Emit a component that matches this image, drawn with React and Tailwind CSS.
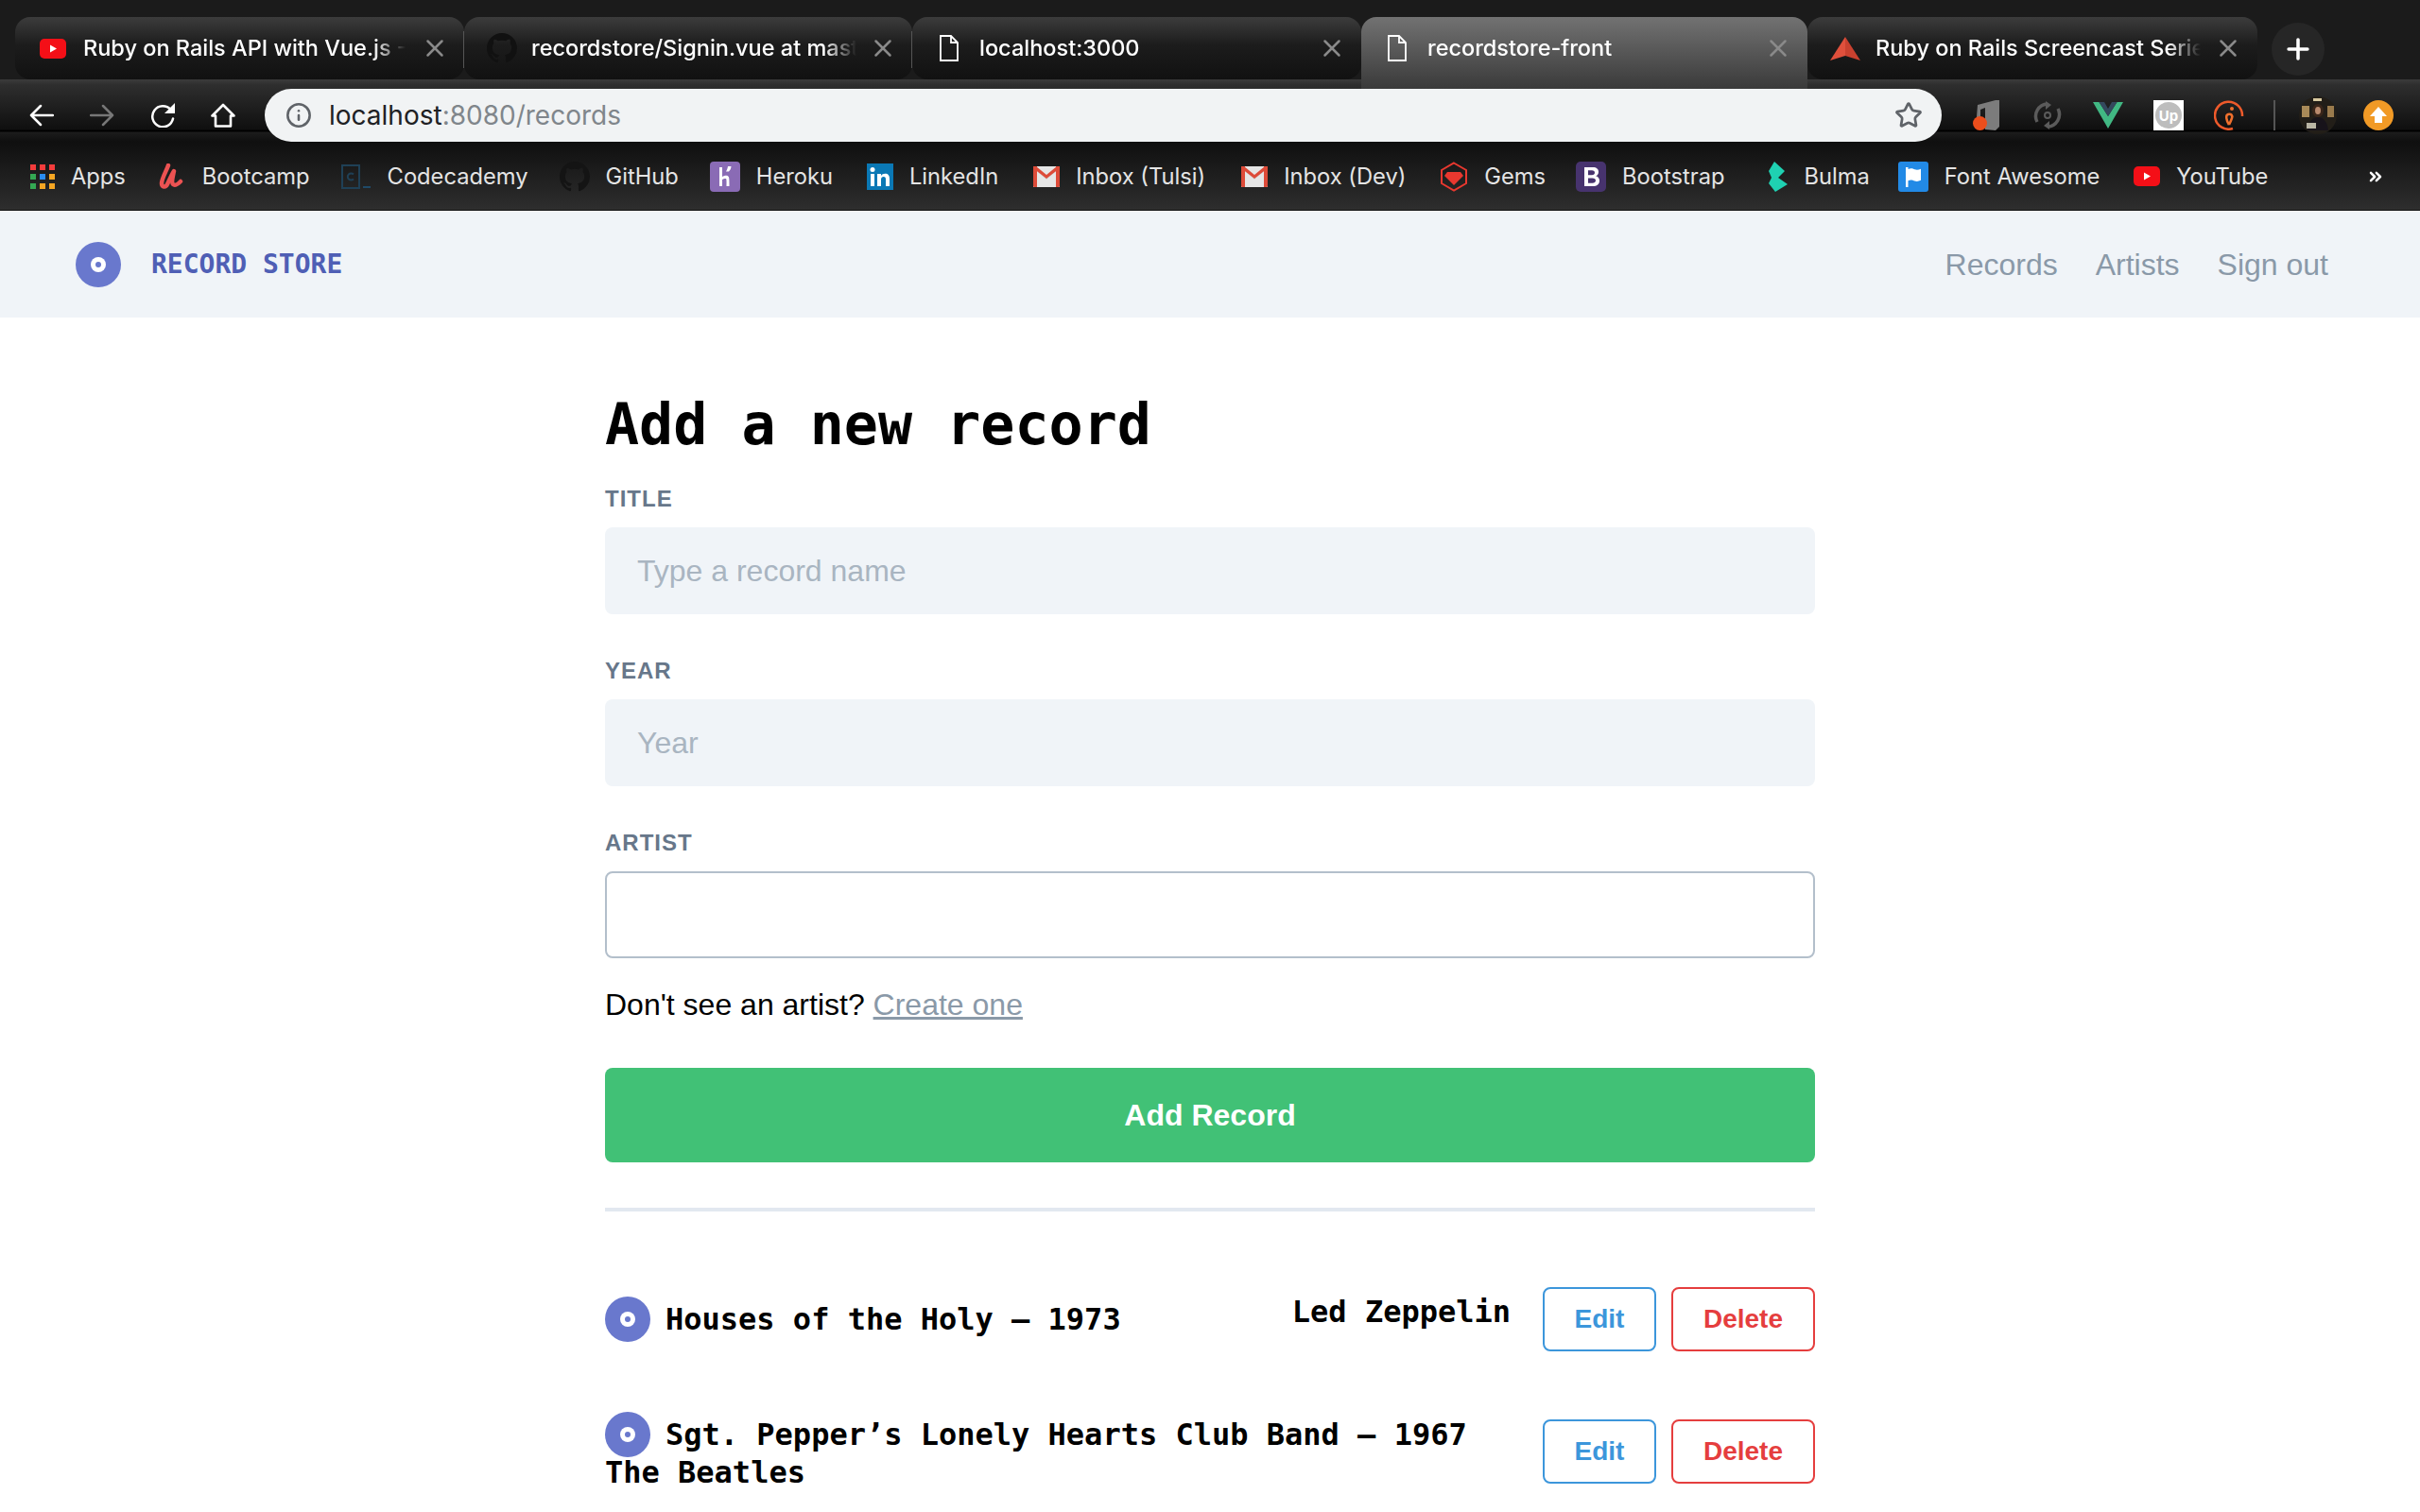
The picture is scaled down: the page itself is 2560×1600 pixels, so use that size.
import React from "react";
import { Star, Info, X, Plus, ChevronsRight } from "lucide-react";

const YouTubeIcon = ({ className }) => (
  <svg viewBox="0 0 28 21" className={className}>
    <rect width="28" height="21" rx="5" fill="#f40f17" />
    <path d="M11 6.500l7 4-7 4z" fill="#fff" />
  </svg>
);
const GitHubIcon = ({ className, fill = "#111" }) => (
  <svg viewBox="0 0 16 16" className={className} fill={fill}>
    <path d="M8 0C3.58 0 0 3.58 0 8c0 3.54 2.29 6.53 5.47 7.59.4.07.55-.17.55-.38v-1.34c-2.23.48-2.7-1.07-2.7-1.07-.36-.92-.89-1.17-.89-1.17-.73-.5.05-.49.05-.49.8.06 1.23.83 1.23.83.71 1.22 1.87.87 2.33.66.07-.52.28-.87.51-1.07-1.78-.2-3.64-.89-3.64-3.95 0-.87.31-1.59.82-2.15-.08-.2-.36-1.02.08-2.12 0 0 .67-.21 2.2.82A7.7 7.7 0 018 3.87c.68 0 1.36.09 2 .27 1.53-1.04 2.2-.82 2.2-.82.44 1.1.16 1.92.08 2.12.51.56.82 1.27.82 2.15 0 3.07-1.87 3.75-3.65 3.95.29.25.54.73.54 1.48v2.19c0 .21.15.46.55.38A8 8 0 0016 8c0-4.42-3.58-8-8-8z" />
  </svg>
);
const RubyArrow = ({ className }) => (
  <svg viewBox="0 0 32 25" className={className}>
    <path d="M16 0L0 25l16-5z" fill="#e0503c" />
    <path d="M16 0l16 25-16-5z" fill="#c9412f" />
  </svg>
);
const AppsIcon = ({ className }) => {
  const cs = ["#f43c3c", "#f43c3c", "#f43c3c", "#34a853", "#2a8cf0", "#f5a623", "#34a853", "#f5a623", "#f5a623"];
  return (
    <svg viewBox="0 0 26 26" className={className}>
      {cs.map((c, i) => (
        <rect key={i} x={(i % 3) * 10} y={Math.floor(i / 3) * 10} width="6" height="6" fill={c} />
      ))}
    </svg>
  );
};
const UdemyIcon = ({ className }) => (
  <svg viewBox="0 0 30 28" className={className} fill="none">
    <path d="M11 2C9 8 4 16 4 21c0 4 4 5 6 1 2-4 5-11 7-14-1 5-3 12-1 14 2 2 5 0 8-3" stroke="#ec5252" strokeWidth="4.5" strokeLinecap="round" strokeLinejoin="round" />
  </svg>
);
const CodecademyIcon = ({ className }) => (
  <svg viewBox="0 0 32 26" className={className} fill="none">
    <rect x="1" y="1" width="18" height="24" stroke="#1f4056" strokeWidth="2" />
    <path d="M13 10.500a3.600 3.600 0 100 5" stroke="#1f4056" strokeWidth="2" />
    <rect x="23" y="23" width="8" height="2" fill="#1f4a68" />
  </svg>
);
const HerokuIcon = ({ className }) => (
  <svg viewBox="0 0 32 32" className={className}>
    <rect width="32" height="32" rx="4" fill="#8a6bb5" />
    <path d="M10 6h3v10c3-1.500 6-2 7 .5.5 1.500.5 5 .5 9.500h-3c0-3 .2-7-.3-7.700-.7-.8-3 0-4.200.7v7h-3zM19 5h3.500c-.3 2.500-1 4-2.500 5.500h-3c1-1.500 1.700-3.200 2-5.500z" fill="#fff" />
  </svg>
);
const LinkedInIcon = ({ className }) => (
  <svg viewBox="0 0 28 28" className={className}>
    <rect width="28" height="28" fill="#0a78b5" />
    <rect x="4" y="11" width="4" height="13" fill="#fff" />
    <circle cx="6" cy="6.500" r="2.500" fill="#fff" />
    <path d="M11 11h4v2c1-1.500 2.500-2.300 4.300-2.300 3.300 0 4.700 2 4.700 5.300v8h-4v-7.300c0-1.700-.6-2.700-2.200-2.700-1.700 0-2.800 1.100-2.800 3v7h-4z" fill="#fff" />
  </svg>
);
const GmailIcon = ({ className }) => (
  <svg viewBox="0 0 28 22" className={className}>
    <rect width="28" height="22" fill="#e6e6e6" />
    <path d="M0 0l14 11L28 0v2L14 14 0 2z" fill="#d4d4d4" />
    <path d="M0 0h4v22H1a1 1 0 01-1-1zM24 0h4v21a1 1 0 01-1 1h-3zM0 0h3l11 9 11-9h3v2L14 13 0 2z" fill="#dd4b39" />
  </svg>
);
const GemsIcon = ({ className }) => (
  <svg viewBox="0 0 30 32" className={className} fill="none">
    <path d="M15 1.500L28 9v14l-13 7.500L2 23V9z" stroke="#e9382f" strokeWidth="2" />
    <path d="M8 11h14l3 4-10 10L5 15z" fill="#e9382f" />
  </svg>
);
const BootstrapIcon = ({ className }) => (
  <svg viewBox="0 0 32 32" className={className}>
    <rect width="32" height="32" rx="5" fill="#47336e" />
    <path d="M9 6h9c4 0 6 2 6 5 0 2.200-1.200 3.700-3 4.300 2.400.5 4 2.300 4 4.900 0 3.700-2.700 5.800-7 5.800H9zm4 3.300v5h4c2 0 3-.9 3-2.500s-1-2.500-3-2.500zm0 8.200v5.200h4.500c2.200 0 3.500-.9 3.500-2.600s-1.300-2.600-3.500-2.600z" fill="#fff" />
  </svg>
);
const BulmaIcon = ({ className }) => (
  <svg viewBox="0 0 22 32" className={className}>
    <path d="M7 0l11 10-7 7 10 7-13 8-7-9 3-6-3-7z" fill="#1fd1b2" />
  </svg>
);
const FontAwesomeIcon = ({ className }) => (
  <svg viewBox="0 0 32 32" className={className}>
    <rect width="32" height="32" rx="3" fill="#228ae6" />
    <path d="M8 6h2.500v2c3-1.500 5-.5 7 .3 2 .7 4 .5 6.500-.5v12c-2.500 1.200-4.500 1.500-6.500.7-2-.8-4.500-1.700-7-.3V27H8z" fill="#fff" />
  </svg>
);
const BackIcon = ({ className, color = "#fff" }) => (
  <svg viewBox="0 0 26 26" className={className} fill="none" stroke={color} strokeWidth="2.500" strokeLinecap="round" strokeLinejoin="round">
    <path d="M25 13H2M12 3L2 13l10 10" />
  </svg>
);
const ForwardIcon = ({ className, color = "#777" }) => (
  <svg viewBox="0 0 26 26" className={className} fill="none" stroke={color} strokeWidth="2.500" strokeLinecap="round" strokeLinejoin="round">
    <path d="M1 13h23M14 3l10 10-10 10" />
  </svg>
);
const ReloadIcon = ({ className }) => (
  <svg viewBox="0 0 27 26" className={className} fill="none">
    <path d="M21.500 7A11 11 0 1024 16.500" stroke="#fff" strokeWidth="2.500" strokeLinecap="round" />
    <path d="M26 0v11H15z" fill="#fff" />
  </svg>
);
const HomeIcon = ({ className }) => (
  <svg viewBox="0 0 26 26" className={className} fill="none" stroke="#fff" strokeWidth="2.600" strokeLinejoin="round">
    <path d="M13 2L1.500 13.500H5V24.500h16V13.500h3.500z" />
  </svg>
);
const DocIcon = ({ className }) => (
  <svg viewBox="0 0 20 28" className={className} fill="none" stroke="#fff" strokeWidth="1.800">
    <path d="M1 1h11l7 7v19H1zM12 1v7h7" />
  </svg>
);
const MusicExt = ({ className }) => (
  <svg viewBox="0 0 28 32" className={className}>
    <path d="M5 5L24 0h4v28l-4 4-11-1V8l-5 2v8H4z" fill="#7c7c7c" />
    <circle cx="7.500" cy="24.500" r="7.500" fill="#ec4e1c" />
  </svg>
);
const SyncExt = ({ className }) => (
  <svg viewBox="0 0 30 30" className={className} fill="none" stroke="#5b5b5b" strokeWidth="3.500">
    <path d="M4 22A13 13 0 0115 3" />
    <path d="M26 8a13 13 0 01-11 19" />
    <path d="M13 0l6 4-6 5zM17 21l-6 5 6 4z" fill="#5b5b5b" stroke="none" />
    <circle cx="15" cy="15" r="3" strokeWidth="2" />
  </svg>
);
const VueExt = ({ className }) => (
  <svg viewBox="0 0 32 28" className={className}>
    <path d="M0 0h6.500L16 15 25.500 0H32L16 28z" fill="#41b883" />
    <path d="M6.500 0H12l4 7 4-7h5.500L16 15z" fill="#34495e" />
  </svg>
);
const UpExt = ({ className }) => (
  <div className={`${className} flex items-center justify-center bg-white`}>
    <div className="flex h-[28px] w-[28px] items-center justify-center rounded-full bg-[#bdbdbd] text-[15px] leading-none font-bold text-white">Up</div>
  </div>
);
const SwirlExt = ({ className }) => (
  <svg viewBox="0 0 32 32" className={className} fill="none" strokeWidth="2.500">
    <path d="M20 30A14.500 14.500 0 1130 17" stroke="#ee5a2b" />
    <path d="M16 26c-3-5-4-10-1-11 3-1 5 1 4 4-1 3-2 5-3 7" stroke="#f0702d" />
    <circle cx="19" cy="9" r="2" fill="#f0702d" stroke="none" />
  </svg>
);
const Avatar = ({ className }) => (
  <svg viewBox="0 0 40 40" className={className}>
    <circle cx="20" cy="20" r="20" fill="#221e18" />
    <rect x="3" y="10" width="8" height="12" fill="#a98a58" />
    <rect x="30" y="10" width="7" height="12" fill="#9a7b4d" />
    <ellipse cx="20" cy="15" rx="6" ry="7" fill="#3a261a" />
    <ellipse cx="20" cy="15" rx="3" ry="4" fill="#b98a6e" />
    <path d="M9 36c1-10 6-14 11-14s10 4 11 14z" fill="#17131a" />
    <rect x="8" y="28" width="10" height="6" fill="#b9b5a5" />
    <rect x="15" y="2" width="9" height="3" fill="#d8c9a0" />
  </svg>
);
const UpdateExt = ({ className }) => (
  <svg viewBox="0 0 32 32" className={className}>
    <circle cx="16" cy="16" r="16" fill="#f19a26" />
    <path d="M16 7l9 10h-5v7h-8v-7H7z" fill="#fff" />
  </svg>
);
const Disc = () => (
  <svg viewBox="0 0 48 48" className="h-[48px] w-[48px] shrink-0">
    <circle cx="24" cy="24" r="24" fill="#6978cd" />
    <circle cx="24" cy="24" r="8" fill="#fff" />
    <circle cx="24" cy="24" r="3" fill="#6978cd" />
  </svg>
);

const chrome = "font-['Inter','Liberation_Sans',sans-serif]";

const tabs = [
  { w: "w-[475px]", pl: "pl-[26px]", gap: "gap-[18px]", icon: <YouTubeIcon className="h-[21px] w-[28px] shrink-0" />, title: "Ruby on Rails API with Vue.js - Part", sep: true },
  { w: "w-[474px]", pl: "pl-[24px]", gap: "gap-[15px]", icon: <GitHubIcon className="h-[32px] w-[32px] shrink-0" />, title: "recordstore/Signin.vue at master", sep: true },
  { w: "w-[475px]", pl: "pl-[29px]", gap: "gap-[22px]", icon: <DocIcon className="h-[28px] w-[20px] shrink-0" />, title: "localhost:3000" },
  { w: "w-[472px]", pl: "pl-[28px]", gap: "gap-[22px]", icon: <DocIcon className="h-[28px] w-[20px] shrink-0" />, title: "recordstore-front", active: true },
  { w: "w-[476px]", pl: "pl-[24px]", gap: "gap-[16px]", icon: <RubyArrow className="h-[25px] w-[32px] shrink-0" />, title: "Ruby on Rails Screencast Series" },
];

const bookmarks = [
  { icon: <AppsIcon className="h-[26px] w-[26px]" />, label: "Apps", box: "w-[27px]", ml: "ml-[31px]" },
  { icon: <UdemyIcon className="h-[28px] w-[30px]" />, label: "Bootcamp", box: "w-[30px]", ml: "ml-[34px]" },
  { icon: <CodecademyIcon className="h-[26px] w-[32px]" />, label: "Codecademy", box: "w-[32px]", ml: "ml-[33px]" },
  { icon: <GitHubIcon className="h-[32px] w-[32px]" fill="#141414" />, label: "GitHub", box: "w-[32px]", ml: "ml-[33px]" },
  { icon: <HerokuIcon className="h-[32px] w-[32px]" />, label: "Heroku", box: "w-[32px]", ml: "ml-[33px]" },
  { icon: <LinkedInIcon className="h-[28px] w-[28px]" />, label: "LinkedIn", box: "w-[28px]", ml: "ml-[36px]" },
  { icon: <GmailIcon className="h-[22px] w-[28px]" />, label: "Inbox (Tulsi)", box: "w-[28px]", ml: "ml-[37px]" },
  { icon: <GmailIcon className="h-[22px] w-[28px]" />, label: "Inbox (Dev)", box: "w-[28px]", ml: "ml-[38px]" },
  { icon: <GemsIcon className="h-[32px] w-[30px]" />, label: "Gems", box: "w-[30px]", ml: "ml-[36px]" },
  { icon: <BootstrapIcon className="h-[32px] w-[32px]" />, label: "Bootstrap", box: "w-[32px]", ml: "ml-[32px]" },
  { icon: <BulmaIcon className="h-[32px] w-[22px]" />, label: "Bulma", box: "w-[22px]", ml: "ml-[45px]" },
  { icon: <FontAwesomeIcon className="h-[32px] w-[32px]" />, label: "Font Awesome", box: "w-[32px]", ml: "ml-[30px]" },
  { icon: <YouTubeIcon className="h-[21px] w-[28px]" />, label: "YouTube", box: "w-[28px]", ml: "ml-[36px]" },
];

function Tab({ t }) {
  return (
    <div
      className={`${t.w} ${t.pl} ${t.gap} relative flex items-center rounded-t-[16px] pr-[16px] ${
        t.active
          ? "h-[76px] bg-[linear-gradient(#727272,#3a3a3a)] pb-[10px]"
          : "h-[66px] rounded-b-[16px] bg-[linear-gradient(#3c3c3c_0,#1c1c1c_45%,#111_100%)]"
      }`}
    >
      {t.icon}
      <span className="mr-[8px] min-w-0 flex-1 overflow-hidden text-[23.5px] font-medium whitespace-nowrap text-white [mask-image:linear-gradient(to_right,#000_90%,transparent_100%)]">
        {t.title}
      </span>
      <X className="-ml-[10px] h-[30px] w-[30px] shrink-0 text-[#8a8a8a]" strokeWidth={2} />
      {t.sep && <span className="absolute top-[15px] right-0 h-[39px] w-px bg-[#555]" />}
    </div>
  );
}

function Field({ label, placeholder, white }) {
  return (
    <div>
      <label className="mb-[14px] block pt-[1px] text-[24px] leading-[32px] font-bold tracking-[1px] text-[#67778a] uppercase">{label}</label>
      <input
        placeholder={placeholder}
        className={`block h-[92px] w-full rounded-[8px] px-[34px] text-[32px] outline-none placeholder:text-[#a9b5c1] ${
          white ? "border-2 border-[#b3bfcb] bg-white" : "bg-[#f0f4f8]"
        }`}
      />
    </div>
  );
}

function RecordRow({ title, artist }) {
  return (
    <div className="flex items-center justify-between gap-[34px]">
      <div className="flex flex-1 flex-wrap items-start justify-between font-['DejaVu_Sans_Mono',monospace] text-[32px] font-bold text-black">
        <div className="flex items-center gap-[16px]">
          <Disc />
          <span>{title}</span>
        </div>
        <div className="mb-[4px] leading-[32px]">{artist}</div>
      </div>
      <div className="flex shrink-0 gap-[16px] text-[28px] font-bold">
        <button className="h-[68px] w-[120px] rounded-[8px] border-2 border-[#3c96db] text-[#3c96db]">Edit</button>
        <button className="h-[68px] w-[152px] rounded-[8px] border-2 border-[#e53e3e] text-[#e53e3e]">Delete</button>
      </div>
    </div>
  );
}

export default function App() {
  return (
    <div className="h-screen overflow-hidden bg-white font-['Liberation_Sans',Arial,sans-serif]">
      {/* Tab strip */}
      <div className={`${chrome} flex h-[84px] items-start bg-[#1b1b1b] pt-[18px] pl-[16px]`}>
        {tabs.map((t) => (
          <Tab key={t.title} t={t} />
        ))}
        <div className="mt-[6px] ml-[15px] flex h-[56px] w-[56px] items-center justify-center rounded-full bg-[#262626]">
          <Plus className="h-[34px] w-[34px] text-white" strokeWidth={2.5} />
        </div>
      </div>

      {/* Toolbar */}
      <div className={`${chrome} flex h-[66px] items-start bg-[linear-gradient(#3b3b3b_0,#2e2e2e_6px,#0f0f0f_53px,#000_54px,#000_55px,#1c1c1c_56px,#0f0f0f_66px)] pt-[10px]`}>
        <div className="flex h-[56px] w-[280px] items-center gap-[38px] pl-[31px]">
          <BackIcon className="h-[26px] w-[26px]" />
          <ForwardIcon className="h-[26px] w-[26px]" />
          <ReloadIcon className="h-[26px] w-[27px]" />
          <HomeIcon className="-ml-[1px] h-[26px] w-[26px]" />
        </div>
        <div className="flex h-[56px] w-[1774px] shrink-0 items-center rounded-full bg-[#f1f3f4] pr-[20px] pl-[22px] text-[28px]">
          <Info className="h-[28px] w-[28px] shrink-0 text-[#5f6368]" strokeWidth={2.2} />
          <span className="ml-[18px] flex-1 text-[#202124]">
            localhost<span className="text-[#80868b]">:8080/records</span>
          </span>
          <Star className="h-[30px] w-[30px] text-[#5f6368]" strokeWidth={2.2} />
        </div>
        <div className="flex h-[56px] flex-1 items-center pl-[33px]">
          <MusicExt className="h-[32px] w-[28px]" />
          <SyncExt className="ml-[36px] h-[30px] w-[30px]" />
          <VueExt className="ml-[33px] h-[28px] w-[32px]" />
          <UpExt className="ml-[32px] h-[32px] w-[32px]" />
          <SwirlExt className="ml-[32px] h-[32px] w-[32px]" />
          <div className="ml-[31px] h-[32px] w-[2px] bg-[#555]" />
          <Avatar className="ml-[25px] h-[40px] w-[40px]" />
          <UpdateExt className="ml-[28px] h-[32px] w-[32px]" />
        </div>
      </div>

      {/* Bookmarks */}
      <div className={`${chrome} flex h-[73px] items-center border-b border-[#111] bg-[linear-gradient(#0f0f0f,#2e2e2e)] pt-[2px] text-[23.7px] text-[#e4e4e4]`}>
        {bookmarks.map((b) => (
          <div key={b.label} className={`${b.ml} flex items-center gap-[17px]`}>
            <div className={`${b.box} flex items-center justify-center`}>{b.icon}</div>
            <span className="whitespace-nowrap">{b.label}</span>
          </div>
        ))}
        <ChevronsRight className="mr-[37px] ml-auto h-[20px] w-[20px] text-white" strokeWidth={3} />
      </div>

      {/* App nav */}
      <nav className="flex h-[113px] items-center justify-between bg-[#f0f4f8] pr-[97px] pl-[80px]">
        <div className="flex items-center gap-[32px]">
          <Disc />
          <span className="font-['DejaVu_Sans_Mono',monospace] text-[28px] font-bold text-[#4f5fb5] uppercase">Record Store</span>
        </div>
        <div className="flex gap-[40px] text-[32px] text-[#8a99a8]">
          <a>Records</a>
          <a>Artists</a>
          <a>Sign out</a>
        </div>
      </nav>

      {/* Main */}
      <main className="mx-auto w-[1280px] pt-[80px]">
        <h1 className="mb-[29px] font-['DejaVu_Sans_Mono',monospace] text-[60px] leading-[66px] font-bold text-black">Add a new record</h1>
        <div className="flex flex-col gap-[43px]">
          <Field label="Title" placeholder="Type a record name" />
          <Field label="Year" placeholder="Year" />
          <div>
            <Field label="Artist" white />
            <p className="mt-[25px] text-[32px] leading-[48px] text-black">
              Don't see an artist? <a className="text-[#8a99a8] underline">Create one</a>
            </p>
          </div>
        </div>
        <button className="mt-[43px] block h-[100px] w-full rounded-[8px] bg-[#41c176] text-[32px] font-bold text-white">Add Record</button>
        <hr className="mt-[48px] mb-[80px] h-[4px] border-0 bg-[#e2e8f0]" />
        <div className="flex flex-col gap-[64px]">
          <RecordRow title="Houses of the Holy — 1973" artist="Led Zeppelin" />
          <RecordRow title="Sgt. Pepper’s Lonely Hearts Club Band — 1967" artist="The Beatles" />
        </div>
      </main>
    </div>
  );
}
